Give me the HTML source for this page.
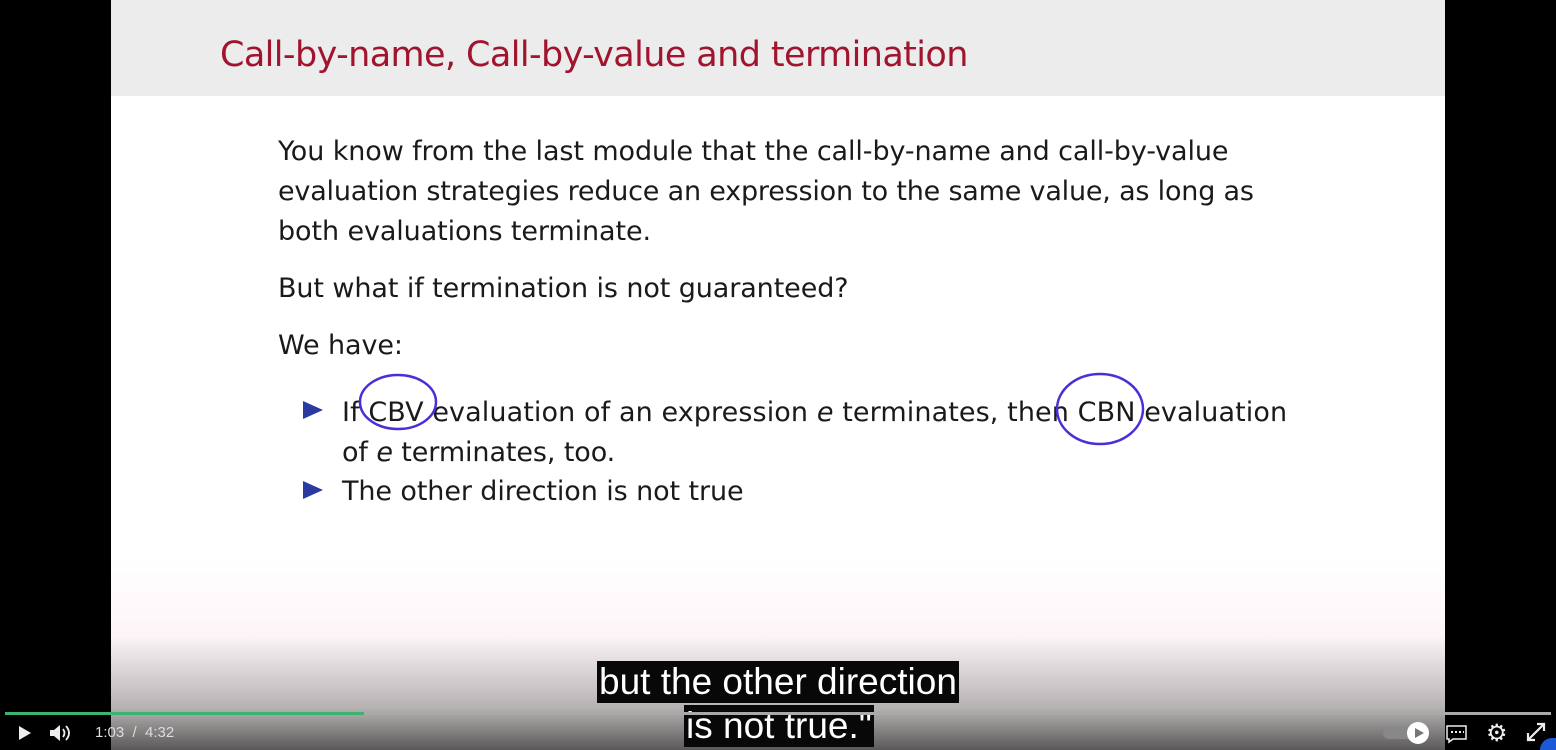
<!DOCTYPE html>
<html style="overflow:hidden;width:1556px;height:750px"><head><style>
html,body{margin:0;overflow:hidden}
body{width:1556px;height:750px;background:#000;position:relative;font-family:"DejaVu Sans","Liberation Sans",sans-serif}
.slide{position:absolute;left:111px;top:0;width:1334px;height:750px;background:#fff;overflow:hidden}
.tb{position:absolute;left:0;top:0;width:1334px;height:96px;background:#ececec}
.title{position:absolute;left:109px;top:35px;font-size:35px;color:#a0142e;letter-spacing:-0.6px;white-space:nowrap}
.t{position:absolute;font-size:27px;color:#1a1a1a;white-space:nowrap;letter-spacing:-0.1px}
.tri{position:absolute;width:0;height:0;border-left:20px solid #2b3a9f;border-top:9px solid transparent;border-bottom:9px solid transparent}
.grad{position:absolute;left:0;top:560px;width:1334px;height:190px;background:linear-gradient(to bottom,rgba(255,255,255,0),rgba(250,235,240,.5) 40%,rgba(150,145,145,.7) 78%,#5a5858 100%)}
.cap{position:absolute;background:#080808;color:#fff;font-family:"Liberation Sans",sans-serif;font-size:37px;line-height:42px;padding:0 2px;white-space:nowrap}
.bar{position:absolute;top:712px;height:3px}
.ctl{position:absolute;color:#ddd;font-family:"Liberation Sans",sans-serif;font-size:15px}
</style></head><body>
<div class="slide">
<div class="tb"></div>
<div class="title">Call-by-name, Call-by-value and termination</div>
<div class="t" style="left:167px;top:136px">You know from the last module that the call-by-name and call-by-value</div>
<div class="t" style="left:167px;top:176px;letter-spacing:-0.2px">evaluation strategies reduce an expression to the same value, as long as</div>
<div class="t" style="left:167px;top:216px">both evaluations terminate.</div>
<div class="t" style="left:167px;top:273px">But what if termination is not guaranteed?</div>
<div class="t" style="left:167px;top:330px">We have:</div>
<div class="tri" style="left:192px;top:401px"></div>
<div class="t" style="left:231px;top:397px;letter-spacing:0.1px">If CBV evaluation of an expression <i>e</i> terminates, then CBN evaluation</div>
<div class="t" style="left:231px;top:437px">of <i>e</i> terminates, too.</div>
<div class="tri" style="left:192px;top:481px"></div>
<div class="t" style="left:231px;top:476px">The other direction is not true</div>
<svg style="position:absolute;left:0;top:0" width="1334" height="500"><g fill="none" stroke="#4a2fd8" stroke-width="2.5"><ellipse cx="287" cy="402" rx="38" ry="27"/><ellipse cx="989" cy="409" rx="43" ry="35"/></g></svg>
<div class="grad"></div>
</div>
<div class="cap" style="left:597px;top:661px">but the other direction</div>
<div class="cap" style="left:684px;top:705px">is not true."</div>
<div class="bar" style="left:5px;width:1546px;background:#aaa"></div>
<div class="bar" style="left:5px;width:359px;background:#3cb371"></div>
<svg style="position:absolute;left:17px;top:725px" width="16" height="16"><path d="M2 1L14 8L2 15Z" fill="#eee"/></svg>
<svg style="position:absolute;left:49px;top:723px" width="22" height="20"><path d="M1 7h4l6-5v16l-6-5H1z" fill="#eee"/><path d="M14 6q3 4 0 8M17 3q6 7 0 14" stroke="#eee" stroke-width="1.8" fill="none"/></svg>
<div class="ctl" style="left:95px;top:724px">1:03 &nbsp;/ &nbsp;4:32</div>
<div style="position:absolute;left:1383px;top:727px;width:40px;height:12px;border-radius:6px;background:#888"></div>
<div style="position:absolute;left:1407px;top:722px;width:22px;height:22px;border-radius:50%;background:#fff"></div>
<svg style="position:absolute;left:1413px;top:727px" width="12" height="12"><path d="M2 1L11 6L2 11Z" fill="#777"/></svg>
<svg style="position:absolute;left:1446px;top:724px" width="22" height="20"><path d="M1 2h19v13H7l-4 3v-3H1z" stroke="#eee" stroke-width="1.5" fill="none"/><path d="M5 8h2M9 8h2M13 8h2M17 8h1" stroke="#eee" stroke-width="2"/></svg>
<div style="position:absolute;left:1486px;top:719px;color:#eee;font-size:24px">⚙</div>
<svg style="position:absolute;left:1526px;top:722px" width="20" height="20"><path d="M2 18L18 2M11 2h7v7M2 11v7h7" stroke="#eee" stroke-width="2.2" fill="none"/></svg>
<div style="position:absolute;left:1540px;top:738px;width:16px;height:12px;border-radius:12px 0 0 0;background:#1a5ad8"></div>
</body></html>
